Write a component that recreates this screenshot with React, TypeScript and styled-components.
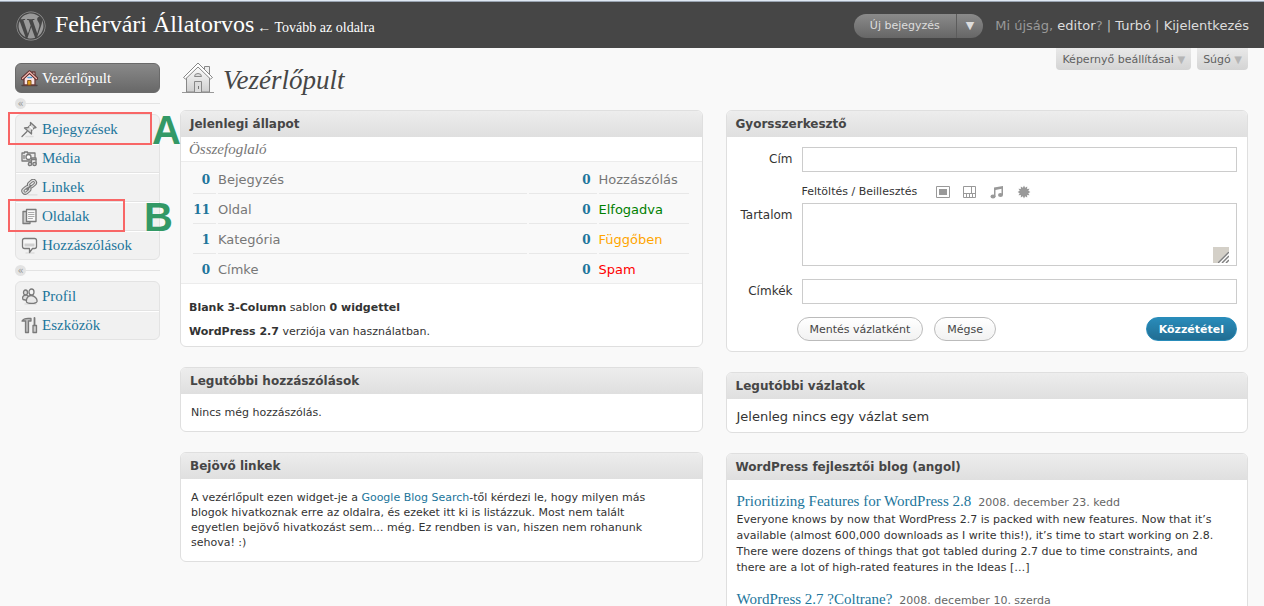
import React from 'react';
import styled, { createGlobalStyle, css } from 'styled-components';
import { FaWordpress } from 'react-icons/fa';

const sans = '"DejaVu Sans", Verdana, sans-serif';
const serif = '"Liberation Serif", Georgia, serif';
const blue = '#21759b';

const GlobalStyle = createGlobalStyle`
  * { box-sizing: border-box; }
  html { height: 100%; overflow: hidden; }
  body { margin: 0; height: 100%; background: #f9f9f9; color: #333; font: 11px/16px ${sans}; overflow: hidden; }
  a { color: ${blue}; text-decoration: none; }
  h1, h2, h3, p, ul { margin: 0; padding: 0; font-weight: normal; }
  button, input, textarea { font-family: inherit; }
`;

const Header = styled.header`
  display: flex;
  align-items: center;
  height: 48px;
  padding: 2px 15px 0 16px;
  background: #464646;
  border-top: 1px solid #dfe8f3;
  box-shadow: inset 0 1px 0 #9aa4b2;
`;
const Logo = styled(FaWordpress)`
  width: 30px;
  height: 30px;
  color: #999;
  flex: none;
`;
const SiteTitle = styled.h1`
  flex: 1;
  margin-left: 9px;
  font: 24px/32px ${serif};
  white-space: nowrap;
  a { color: #fff; }
`;
const VisitLink = styled.a`
  margin-left: 3px;
  font-size: 14px;
`;
const Pill = styled.div`
  display: flex;
  height: 24px;
  border-radius: 12px;
  background: linear-gradient(#8a8a8a, #666);
  overflow: hidden;
`;
const PillButton = styled.button<{ $arrow?: boolean }>`
  border: 0;
  background: none;
  padding: 0 ${p => (p.$arrow ? '9px' : '16px')};
  color: #ddd;
  font-size: 11px;
  ${p => p.$arrow && css`border-left: 1px solid #5c5c5c;`}
`;
const UserInfo = styled.div`
  margin-left: 12px;
  color: #999;
  font-size: 13px;
  white-space: nowrap;
  a { color: #ddd; }
  i { font-style: normal; color: #bbb; }
`;

const Page = styled.div`
  display: grid;
  grid-template-columns: 145px minmax(0, 1fr);
  column-gap: 20px;
  padding: 0 16px 0 15px;
`;

const Sidebar = styled.nav`
  padding-top: 15px;
`;
const Menu = styled.ul`
  list-style: none;
  border: 1px solid #e3e3e3;
  border-radius: 6px;
  background: #f1f1f1;
`;
const MenuItem = styled.li`
  position: relative;
  height: 28px;
  & + & { height: 29px; border-top: 1px solid #e3e3e3; box-shadow: inset 0 1px 0 #fff; }
`;
const MenuLink = styled.a<{ $current?: boolean }>`
  display: flex;
  align-items: center;
  gap: 4px;
  height: 28px;
  padding-left: 5px;
  font: 15px/18px ${serif};
  ${p => p.$current && css`
    height: 30px;
    border: 1px solid #6a6a6a;
    border-radius: 6px;
    background: linear-gradient(#898989, #686868);
    color: #fff;
  `}
`;
const Separator = styled.div`
  display: flex;
  align-items: center;
  height: 21px;
  &::after { content: ''; flex: 1; height: 1px; background: #e3e3e3; }
`;
const Fold = styled.button`
  width: 11px;
  height: 11px;
  padding: 0;
  border: 0;
  border-radius: 50%;
  background: #e3e3e3;
  color: #999;
  font-size: 10px;
  line-height: 9px;
`;

const Frame = styled.span<{ $w: number }>`
  position: absolute;
  left: -8px;
  top: -3px;
  z-index: 2;
  width: ${p => p.$w}px;
  height: 33px;
  border: 2px solid #f86666;
  pointer-events: none;
`;
const Mark = styled.span<{ $gap: number }>`
  position: absolute;
  left: 100%;
  top: -6px;
  margin-left: ${p => p.$gap}px;
  font: bold 40px/44px "Liberation Sans", Arial, sans-serif;
  color: #339966;
`;

const Main = styled.main`min-width: 0;`;
const TitleRow = styled.div`
  display: flex;
  justify-content: space-between;
  align-items: flex-start;
  height: 62px;
`;
const PageTitle = styled.h2`
  display: flex;
  align-items: flex-start;
  gap: 7px;
  padding: 13px 0 0 2px;
  font: italic 27px/38px ${serif};
  color: #464646;
`;
const Tabs = styled.div`
  display: flex;
  gap: 6px;
`;
const Tab = styled.button`
  height: 22px;
  padding: 0 6px;
  border: 0;
  border-radius: 0 0 4px 4px;
  background: linear-gradient(#e9e9e9, #d4d4d4);
  color: #606060;
  font-size: 11px;
  span { color: #b5b5b5; font-size: 10px; }
`;
const Columns = styled.div`
  display: grid;
  grid-template-columns: minmax(0, 1fr) minmax(0, 1fr);
  column-gap: 23px;
  align-items: start;
`;
const Column = styled.div`
  display: flex;
  flex-direction: column;
  gap: 20px;
`;
const Box = styled.section`
  border: 1px solid #dfdfdf;
  border-radius: 6px;
  background: #fff;
  overflow: hidden;
`;
const BoxTitle = styled.h3`
  height: 26px;
  padding: 0 9px;
  background: linear-gradient(#ededed, #dfdfdf);
  color: #464646;
  font: bold 12px/27px ${sans};
`;
const BoxBody = styled.div<{ $pad: string }>`
  padding: ${p => p.$pad};
`;

const Summary = styled.p`
  padding: 2px 8px 0;
  height: 24px;
  font: italic 15px/20px ${serif};
  color: #777;
`;
const TableWrap = styled.div`
  padding: 2px 11px 0 10px;
  border: solid #ececec;
  border-width: 1px 0;
  background: #f9f9f9;
`;
const Stats = styled.table`
  width: 100%;
  border-spacing: 2px 0;
  font-size: 13px;
  td { height: 30px; padding: 2px 0 0; border-bottom: 1px solid #e8e8e8; }
  tr:last-child td { height: 29px; border-bottom: 0; }
`;
const Num = styled.td<{ $w: string }>`
  width: ${p => p.$w};
  text-align: right;
  a { padding-right: 6px; font: bold 12px/18px "DejaVu Serif", Georgia, serif; }
`;
const Label = styled.td<{ $c?: string; $w?: string }>`
  width: ${p => p.$w || 'auto'};
  color: ${p => p.$c || '#777'};
`;
const Version = styled.p`
  line-height: 24px;
`;
const Incoming = styled.p`
  line-height: 15px;
`;

const Form = styled.form`
  display: grid;
  grid-template-columns: 56px minmax(0, 1fr);
  column-gap: 9px;
  padding: 10px;
`;
const FieldLabel = styled.label`
  justify-self: end;
  font-size: 12px;
  line-height: 24px;
`;
const Input = styled.input`
  width: 100%;
  height: 25px;
  border: 1px solid #ccc;
  background: #fff;
`;
const Upload = styled.div`
  grid-column: 2;
  display: flex;
  align-items: center;
  gap: 13px;
  height: 31px;
  padding-top: 8px;
  span { margin-right: 6px; }
`;
const UploadButton = styled.button`
  padding: 0;
  border: 0;
  background: none;
  width: 14px;
  height: 14px;
  svg { display: block; }
`;
const AreaWrap = styled.div`
  position: relative;
  height: 76px;
`;
const Area = styled.textarea`
  display: block;
  width: 100%;
  height: 63px;
  border: 1px solid #ccc;
  resize: none;
`;
const Grip = styled.svg`
  position: absolute;
  right: 8px;
  top: 44px;
`;
const Actions = styled.div`
  grid-column: 2;
  display: flex;
  gap: 11px;
  margin: 13px 0 0 -5px;
`;
const Button = styled.button<{ $primary?: boolean }>`
  height: 24px;
  padding: 0 12px;
  border: 1px solid #bbb;
  border-radius: 12px;
  background: linear-gradient(#fff, #f2f2f2);
  color: #464646;
  font-size: 11px;
  ${p => p.$primary && css`
    margin-left: auto;
    border-color: #298cba;
    background: linear-gradient(#298cba, #216d92);
    color: #fff;
    font-weight: bold;
  `}
`;
const Note = styled.p`
  font-size: 13px;
`;
const Post = styled.article`
  & + & { margin-top: 13px; }
  p { padding-right: 16px; }
`;
const PostHead = styled.h3`
  display: flex;
  align-items: baseline;
  gap: 7px;
  height: 21px;
  font-size: 11px;
  a { font: 15px/20px ${serif}; }
  time { color: #666; }
`;

const Icon = ({ children }: { children: React.ReactNode }) => (
  <svg width="17" height="17" viewBox="0 0 17 17" fill="none" stroke="#7a7a7a" strokeWidth="1.3" strokeLinejoin="round" strokeLinecap="round" aria-hidden="true">{children}</svg>
);
const HomeIcon = () => (
  <Icon>
    <path d="M1 15.5h15" stroke="#4d4444" />
    <path d="M11 2h3v5h-3z" fill="#fff" stroke="#6b3a38" />
    <path d="M3 8l5.500-5 5.500 5v7H3z" fill="#fbe3e3" stroke="#6b3a38" />
    <path d="M1.500 8.500l7-6.500 7 6.500" stroke="#5b302f" strokeWidth="3.200" />
    <path d="M1.500 8.500l7-6.500 7 6.500" stroke="#f3b3ab" strokeWidth="1.300" />
    <path d="M7 10.500h3V15H7z" fill="#e6a01c" stroke="#8a5a1d" strokeWidth="1" />
    <path d="M7 7.500h3.500" stroke="#4aa0d8" strokeWidth="1.500" />
  </Icon>
);
const PinIcon = () => (
  <Icon>
    <path d="M5 15.500h7" stroke="#ddd" />
    <path d="M1 15.500l5-5" stroke="#777" />
    <path d="M9.500 1.500l5.500 5-2 .5-2.500 2.500v3.500L3.500 7l3.500-.5 2.500-2.500z" fill="#d8d8d8" />
    <path d="M9 5.500l2.500 2.500" stroke="#fff" />
  </Icon>
);
const MediaIcon = () => (
  <Icon>
    <path d="M1 3h2.500V2h3v1H14v8H1z" fill="#ececec" />
    <circle cx="7.500" cy="7" r="2.500" fill="#fff" />
    <path d="M3 5.500v3" />
    <path d="M10.500 14V8h4.500v6" fill="#f1f1f1" />
    <path d="M10.500 9.500H15" />
    <circle cx="9" cy="14" r="1.700" fill="#ccc" />
    <circle cx="13.500" cy="14" r="1.700" fill="#ccc" />
  </Icon>
);
const LinkIcon = () => (
  <Icon>
    <path d="M7 15.800h9" stroke="#ddd" />
    <g strokeWidth="3.200" stroke="#777">
      <rect x="7.500" y="2.500" width="7.500" height="4.500" rx="2.200" transform="rotate(-40 11 5)" />
      <rect x="1.500" y="9" width="7.500" height="4.500" rx="2.200" transform="rotate(-40 5 11)" />
    </g>
    <g strokeWidth="1.200" stroke="#e0e0e0">
      <rect x="7.500" y="2.500" width="7.500" height="4.500" rx="2.200" transform="rotate(-40 11 5)" />
      <rect x="1.500" y="9" width="7.500" height="4.500" rx="2.200" transform="rotate(-40 5 11)" />
    </g>
    <path d="M6 10.500l4-4" stroke="#777" strokeWidth="1.600" />
  </Icon>
);
const PagesIcon = () => (
  <Icon>
    <path d="M2 3.500h7v12H2z" fill="#ccc" />
    <path d="M5.500 1.500h9.500v12H5.500z" fill="#fafafa" />
    <path d="M7.500 4.500h5.500M7.500 6.500h5.500M7.500 8.500h5.500M7.500 10.500h4" stroke="#aaa" strokeWidth="1" />
  </Icon>
);
const CommentIcon = () => (
  <Icon>
    <path d="M5 16h8" stroke="#ddd" />
    <path d="M3.500 1.500h10q2 0 2 2v6q0 2-2 2h-2l-3 4v-4h-5q-2 0-2-2v-6q0-2 2-2z" fill="#f7f7f7" />
    <path d="M3.500 6.500h10v3h-10z" fill="#d0d0d0" stroke="none" />
  </Icon>
);
const UsersIcon = () => (
  <Icon>
    <path d="M4 16h11" stroke="#ddd" />
    <ellipse cx="4.500" cy="4.500" rx="2" ry="2.500" fill="#ddd" />
    <path d="M2 11.500c-2-4.500 4-5.500 5.500-3l-1 4z" fill="#ddd" />
    <ellipse cx="10.500" cy="4" rx="2.500" ry="3" fill="#f4f4f4" />
    <path d="M5.500 14c-.5-3.500 1.500-6.500 4.500-6.500 3.500 0 6.500 3.500 6 6-1 2.500-9.500 2.500-10.500.5z" fill="#e8e8e8" />
  </Icon>
);
const ToolsIcon = () => (
  <Icon>
    <path d="M1 4q2-3.500 9-2.500v2.500H7.500v11.500h-3V4z" fill="#bbb" />
    <path d="M13.500 1v8" strokeWidth="1.800" />
    <path d="M12 8.500h3.500v7H12z" fill="#ccc" />
  </Icon>
);
const BigHome = () => (
  <svg width="34" height="34" viewBox="0 0 34 34" fill="none" stroke="#888" aria-hidden="true">
    <defs>
      <linearGradient id="wall" x1="0" y1="0" x2="0" y2="1">
        <stop offset="0" stopColor="#fff" /><stop offset="1" stopColor="#cfcfcf" />
      </linearGradient>
    </defs>
    <path d="M0 31.500h32" stroke="#999" />
    <path d="M22.500 8.500v-3h5v10" fill="#eee" />
    <path d="M4.500 15L16 4l11.500 11v16h-23z" fill="url(#wall)" />
    <path d="M1.500 16.500L16 2l14.500 14.500-2 1.500L16 6 3.500 18z" fill="#fff" strokeLinejoin="round" />
    <path d="M12.500 15.500q0-3 3.500-3t3.500 3z" fill="#ddd" />
    <path d="M12.500 20.500h7v11h-7z" fill="#dcdcdc" />
    <path d="M16.500 25v3" stroke="#777" />
  </svg>
);

const mainMenu = [
  { text: 'Bejegyzések', icon: <PinIcon />, frame: 144, mark: 'A', gap: 2 },
  { text: 'Média', icon: <MediaIcon /> },
  { text: 'Linkek', icon: <LinkIcon /> },
  { text: 'Oldalak', icon: <PagesIcon />, frame: 117, mark: 'B', gap: 21 },
  { text: 'Hozzászólások', icon: <CommentIcon /> },
];
const userMenu = [
  { text: 'Profil', icon: <UsersIcon /> },
  { text: 'Eszközök', icon: <ToolsIcon /> },
];
const stats: [string, string, string, string?][] = [
  ['0', 'Bejegyzés', 'Hozzászólás'],
  ['11', 'Oldal', 'Elfogadva', 'green'],
  ['1', 'Kategória', 'Függőben', 'orange'],
  ['0', 'Címke', 'Spam', 'red'],
];

const burst = Array.from({ length: 24 }, (_, i) => {
  const r = i % 2 ? 4.4 : 6.4;
  const a = (i * Math.PI) / 12;
  return `${(7 + r * Math.sin(a)).toFixed(2)},${(7 - r * Math.cos(a)).toFixed(2)}`;
}).join(' ');

export default function App() {
  return (
    <>
      <GlobalStyle />
      <Header>
        <Logo />
        <SiteTitle>
          <a href="#site">Fehérvári Állatorvos</a>
          <VisitLink href="#visit">← Tovább az oldalra</VisitLink>
        </SiteTitle>
        <Pill>
          <PillButton>Új bejegyzés</PillButton>
          <PillButton $arrow aria-label="Menü">▼</PillButton>
        </Pill>
        <UserInfo>
          Mi újság, <a href="#profile">editor</a>? <i>|</i> <a href="#turbo">Turbó</a> <i>|</i> <a href="#logout">Kijelentkezés</a>
        </UserInfo>
      </Header>
      <Page>
        <Sidebar>
          <MenuLink $current href="#dashboard"><HomeIcon />Vezérlőpult</MenuLink>
          <Separator><Fold aria-label="Összecsukás">«</Fold></Separator>
          <Menu>
            {mainMenu.map(m => (
              <MenuItem key={m.text}>
                <MenuLink href="#menu">{m.icon}{m.text}</MenuLink>
                {m.frame && (
                  <Frame $w={m.frame}>
                    <Mark $gap={m.gap}>{m.mark}</Mark>
                  </Frame>
                )}
              </MenuItem>
            ))}
          </Menu>
          <Separator><Fold aria-label="Összecsukás">«</Fold></Separator>
          <Menu>
            {userMenu.map(m => (
              <MenuItem key={m.text}><MenuLink href="#menu">{m.icon}{m.text}</MenuLink></MenuItem>
            ))}
          </Menu>
        </Sidebar>
        <Main>
          <TitleRow>
            <PageTitle><BigHome />Vezérlőpult</PageTitle>
            <Tabs>
              <Tab>Képernyő beállításai <span>▼</span></Tab>
              <Tab>Súgó <span>▼</span></Tab>
            </Tabs>
          </TitleRow>
          <Columns>
            <Column>
              <Box>
                <BoxTitle>Jelenlegi állapot</BoxTitle>
                <Summary>Összefoglaló</Summary>
                <TableWrap>
                  <Stats>
                    <tbody>
                      {stats.map(([n, a, b, c]) => (
                        <tr key={a}>
                          <Num $w="23px"><a href="#n">{n}</a></Num>
                          <Label>{a}</Label>
                          <Num $w="68px"><a href="#n">0</a></Num>
                          <Label $w="90px" $c={c}>{b}</Label>
                        </tr>
                      ))}
                    </tbody>
                  </Stats>
                </TableWrap>
                <BoxBody $pad="12px 8px 2px">
                  <Version><b>Blank 3-Column</b> sablon <b>0 widgettel</b></Version>
                  <Version><b>WordPress 2.7</b> verziója van használatban.</Version>
                </BoxBody>
              </Box>
              <Box>
                <BoxTitle>Legutóbbi hozzászólások</BoxTitle>
                <BoxBody $pad="11px 10px 10px"><p>Nincs még hozzászólás.</p></BoxBody>
              </Box>
              <Box>
                <BoxTitle>Bejövő linkek</BoxTitle>
                <BoxBody $pad="11px 35px 11px 10px">
                  <Incoming>
                    A vezérlőpult ezen widget-je a <a href="#blogsearch">Google Blog Search</a>-től kérdezi le, hogy milyen más blogok hivatkoznak erre az oldalra, és ezeket itt ki is listázzuk. Most nem talált egyetlen bejövő hivatkozást sem… még. Ez rendben is van, hiszen nem rohanunk sehova! :)
                  </Incoming>
                </BoxBody>
              </Box>
            </Column>
            <Column>
              <Box>
                <BoxTitle>Gyorsszerkesztő</BoxTitle>
                <Form onSubmit={e => e.preventDefault()}>
                  <FieldLabel htmlFor="title">Cím</FieldLabel>
                  <Input id="title" />
                  <Upload>
                    <span>Feltöltés / Beillesztés</span>
                    <UploadButton type="button" aria-label="Kép">
                      <svg width="14" height="14"><path d="M.5 1.500h13v11H.5z" fill="none" stroke="#999" /><path d="M3 4h8v6H3z" fill="#999" /></svg>
                    </UploadButton>
                    <UploadButton type="button" aria-label="Videó">
                      <svg width="14" height="14" fill="none" stroke="#999"><path d="M.5 1.500h12v11H.5zM8.500 1.500v7M0 8.500h13M3.500 9v4M6.500 9v4M9.500 9v4" /></svg>
                    </UploadButton>
                    <UploadButton type="button" aria-label="Hang">
                      <svg width="14" height="14" fill="#999"><path d="M4 2.500L13 1v2.500L5.500 5v7H4z" /><path d="M11.500 2H13v8h-1.500z" /><ellipse cx="3" cy="11.500" rx="2.500" ry="2" /><ellipse cx="10.500" cy="10" rx="2.500" ry="2" /></svg>
                    </UploadButton>
                    <UploadButton type="button" aria-label="Fájl">
                      <svg width="14" height="14"><polygon points={burst} fill="#999" /></svg>
                    </UploadButton>
                  </Upload>
                  <FieldLabel htmlFor="content">Tartalom</FieldLabel>
                  <AreaWrap>
                    <Area id="content" />
                    <Grip width="16" height="16" aria-hidden="true">
                      <path d="M0 0h16v16H0z" fill="#d4d0c8" />
                      <path d="M4 16L16 4v12z" fill="#fff" />
                      <path d="M5 16L16 5M9 16l7-7M13 16l3-3" stroke="#808080" strokeWidth="1.500" />
                    </Grip>
                  </AreaWrap>
                  <FieldLabel htmlFor="tags">Címkék</FieldLabel>
                  <Input id="tags" />
                  <Actions>
                    <Button type="button">Mentés vázlatként</Button>
                    <Button type="reset">Mégse</Button>
                    <Button $primary type="submit">Közzététel</Button>
                  </Actions>
                </Form>
              </Box>
              <Box>
                <BoxTitle>Legutóbbi vázlatok</BoxTitle>
                <BoxBody $pad="10px 10px 7px"><Note>Jelenleg nincs egy vázlat sem</Note></BoxBody>
              </Box>
              <Box>
                <BoxTitle>WordPress fejlesztői blog (angol)</BoxTitle>
                <BoxBody $pad="11px 10px">
                  <Post>
                    <PostHead><a href="#p1">Prioritizing Features for WordPress 2.8</a><time>2008. december 23. kedd</time></PostHead>
                    <p>Everyone knows by now that WordPress 2.7 is packed with new features. Now that it’s available (almost 600,000 downloads as I write this!), it’s time to start working on 2.8. There were dozens of things that got tabled during 2.7 due to time constraints, and there are a lot of high-rated features in the Ideas […]</p>
                  </Post>
                  <Post>
                    <PostHead><a href="#p2">WordPress 2.7 ?Coltrane?</a><time>2008. december 10. szerda</time></PostHead>
                  </Post>
                </BoxBody>
              </Box>
            </Column>
          </Columns>
        </Main>
      </Page>
    </>
  );
}
